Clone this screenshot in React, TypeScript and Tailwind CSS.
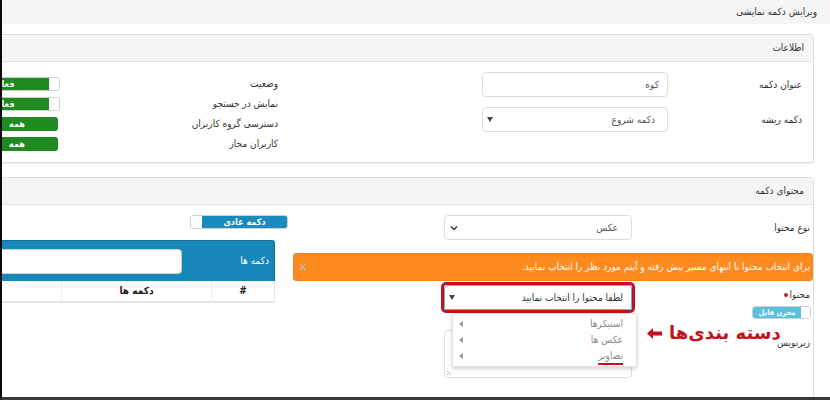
import React from "react";

const Tri = () => (
  <svg width="6" height="5" viewBox="0 0 6 5" className="shrink-0">
    <path d="M0 0h6L3 5z" fill="#444" />
  </svg>
);

const LeftTri = () => (
  <svg width="4" height="6" viewBox="0 0 4 6" className="shrink-0">
    <path d="M4 0v6L0 3z" fill="#999" />
  </svg>
);

const Chevron = () => (
  <svg width="8" height="6" viewBox="0 0 8 6" className="shrink-0">
    <path d="M1 1.5l3 3 3-3" fill="none" stroke="#333" strokeWidth="1.4" />
  </svg>
);

function GreenSwitch({ ml }: { ml: string }) {
  return (
    <div className={`flex h-[14px] rounded-[3px] border border-[#cfcfcf] overflow-hidden ${ml}`}>
      <div className="w-[10px] bg-white" />
      <div className="w-[89px] bg-[#1f8a1f] text-white text-[9px] font-bold flex items-center justify-center leading-none">
        فعال
      </div>
    </div>
  );
}

function GreenButton() {
  return (
    <div className="ml-[21px] w-[82px] h-[14px] rounded-[3px] bg-[#1f8a1f] text-white text-[9px] font-bold flex items-center justify-center leading-none">
      همه
    </div>
  );
}

export default function App() {
  return (
    <div
      dir="rtl"
      className="relative w-[830px] h-[400px] overflow-hidden bg-white border-l-2 border-l-[#0a0a0a] border-b-[3px] border-b-[#3a3a3a] font-['DejaVu_Sans_Condensed','DejaVu_Sans',sans-serif] text-[10px] text-[#333] leading-[14px]"
    >
      {/* page title */}
      <div className="h-[24px] bg-[#f5f5f5] flex items-center pr-[13px] text-[#333]">ویرایش دکمه نمایشی</div>

      {/* card 1 */}
      <div className="mt-[10px] mr-[16px] w-[860px] border border-[#dddddd] rounded-[3px] shadow-[0_1px_2px_rgba(0,0,0,0.08)] bg-white">
        <div className="h-[27px] bg-[#f5f5f5] border-b border-[#e3e3e3] flex items-center pr-[9px]">اطلاعات</div>
        <div className="h-[100px] flex">
          {/* right block */}
          <div className="w-[394px] shrink-0 pt-[10px]">
            <div className="flex items-center h-[25px]">
              <div className="w-[145px] pr-[11px]">عنوان دکمه</div>
              <div className="w-[186px] h-[25px] border border-[#dddddd] rounded-[4px] flex items-center pr-[8px] text-[#555]">
                کوه
              </div>
            </div>
            <div className="flex items-center h-[25px] mt-[10px]">
              <div className="w-[145px] pr-[11px]">دکمه ریشه</div>
              <div className="w-[186px] h-[25px] border border-[#dddddd] rounded-[4px] flex items-center justify-between pr-[12px] pl-[4px] text-[#555]">
                <span>دکمه شروع</span>
                <Tri />
              </div>
            </div>
          </div>
          {/* left block */}
          <div className="flex-1 pt-[12px]">
            <div className="h-[20px] flex items-center justify-between pr-[141px]">
              <span>وضعیت</span>
              <GreenSwitch ml="ml-[4px]" />
            </div>
            <div className="h-[20px] flex items-center justify-between pr-[141px]">
              <span>نمایش در جستجو</span>
              <GreenSwitch ml="ml-[4px]" />
            </div>
            <div className="h-[20px] flex items-center justify-between pr-[141px]">
              <span>دسترسی گروه کاربران</span>
              <GreenButton />
            </div>
            <div className="h-[20px] flex items-center justify-between pr-[141px]">
              <span>کاربران مجاز</span>
              <GreenButton />
            </div>
          </div>
        </div>
      </div>

      {/* card 2 */}
      <div className="mt-[14px] mr-[16px] w-[860px] h-[300px] border border-[#dddddd] rounded-[3px] bg-white">
        <div className="h-[27px] bg-[#f5f5f5] border-b border-[#e3e3e3] flex items-center pr-[9px]">محتوای دکمه</div>
        <div className="flex gap-[5px]">
          {/* right column */}
          <div className="w-[520px] shrink-0 pt-[10px]">
            <div className="flex items-center h-[25px]">
              <div className="w-[181px] pr-[3px]">نوع محتوا</div>
              <div className="w-[188px] h-[25px] border border-[#dddddd] rounded-[4px] flex items-center justify-between pr-[13px] pl-[5px] text-[#555]">
                <span>عکس</span>
                <Chevron />
              </div>
            </div>

            <div className="mt-[13px] h-[28px] rounded-[3px] bg-[#fd8a1e] border border-[#f7821a] flex items-center justify-between pr-[2px] pl-[4px] text-white">
              <span>برای انتخاب محتوا تا انتهای مسیر پیش رفته و آیتم مورد نظر را انتخاب نمایید.</span>
              <span className="text-[#c9b39a] text-[13px] font-bold">×</span>
            </div>

            {/* content row */}
            <div className="flex items-start">
              <div className="w-[178px] pr-[2px] pt-[7px]">
                <div className="flex items-center gap-[2px] pr-[1px]">
                  <span>محتوا</span>
                  <span className="w-[4px] h-[4px] rounded-full bg-[#e0121a]" />
                </div>
                <div className="mt-[4px] flex">
                  <div className="flex h-[13px] rounded-[3px] border border-[#cfcfcf] overflow-hidden">
                    <div className="w-[9px] bg-white" />
                    <div className="w-[48px] bg-[#5bc0de] text-white text-[7.5px] font-bold flex items-center justify-center leading-none whitespace-nowrap">
                      مخزن فایل
                    </div>
                  </div>
                </div>
              </div>
              <div className="relative mt-[1px]">
                <div className="w-[194px] h-[31px] border-[3px] border-[#c1121f] rounded-[5px]">
                  <div className="h-[25px] border border-[#66afe9] rounded-[3px] bg-white flex items-center justify-between pr-[8px] pl-[4px] text-[#333]">
                    <span>لطفا محتوا را انتخاب نمایید</span>
                    <Tri />
                  </div>
                </div>
                {/* dropdown */}
                <div className="absolute z-10 top-full left-[11px] w-[185px] h-[54px] bg-white border border-[#e2e2e2] rounded-[2px] shadow-[0_2px_4px_rgba(0,0,0,0.18)] pt-[2px] text-[#888]">
                  <div className="h-[16px] flex items-center justify-between pr-[13px] pl-[6px]">
                    <span>استیکرها</span>
                    <LeftTri />
                  </div>
                  <div className="h-[16px] flex items-center justify-between pr-[13px] pl-[6px]">
                    <span>عکس ها</span>
                    <LeftTri />
                  </div>
                  <div className="h-[16px] flex items-center justify-between pr-[13px] pl-[6px]">
                    <span className="underline decoration-[#c1121f] decoration-2 underline-offset-[4px]">تصاویر</span>
                    <LeftTri />
                  </div>
                </div>
              </div>
            </div>

            {/* caption row */}
            <div className="flex items-start">
              <div className="w-[181px] pr-[3px] pt-[17px]">زیرنویس</div>
              <div className="relative mt-[11px] w-[188px] h-[48px] border border-[#dddddd] rounded-[4px] bg-white">
                <svg width="6" height="6" viewBox="0 0 6 6" className="absolute left-[2px] bottom-[2px]">
                  <path d="M0 2l4 4M0 5l1 1" stroke="#999" strokeWidth="0.8" />
                </svg>
              </div>
            </div>
          </div>

          {/* left column */}
          <div className="flex-1 pt-[10px]">
            <div className="flex">
              <div className="flex h-[14px] rounded-[3px] border border-[#cfcfcf] overflow-hidden">
                <div className="w-[85px] bg-[#1a8bbd] text-white text-[9px] font-bold flex items-center justify-center leading-none">
                  دکمه عادی
                </div>
                <div className="w-[11px] bg-white" />
              </div>
            </div>
            <div className="mt-[11px] mr-[13px]">
              <div className="h-[41px] bg-[#1787b9] border-t border-r border-[#136f98] rounded-tr-[3px] flex items-center justify-between pr-[5px]">
                <span className="text-white">دکمه ها</span>
                <div className="w-[227px] h-[25px] bg-white rounded-[4px] border border-[#d0d0d0]" />
              </div>
              <div className="h-[22px] flex bg-white border-b-2 border-[#e6e6e6] border-r border-r-[#e6e6e6] font-bold text-[#222]">
                <div className="w-[63px] border-l border-[#eeeeee] flex items-center justify-center">#</div>
                <div className="w-[150px] border-l border-[#eeeeee] flex items-center justify-center">دکمه ها</div>
                <div className="flex-1" />
              </div>
            </div>
          </div>
        </div>
      </div>

      {/* annotation */}
      <div dir="ltr" className="absolute left-[645px] top-[324px] flex items-center gap-[7px]">
        <svg width="15" height="11" viewBox="0 0 15 11">
          <path d="M0 5.5L6 0v3.5h9v4H6V11z" fill="#c4121a" />
        </svg>
        <span dir="rtl" className="text-[18px] font-bold text-[#c4121a] leading-none font-['DejaVu_Sans',sans-serif]">دسته بندی‌ها</span>
      </div>
    </div>
  );
}
